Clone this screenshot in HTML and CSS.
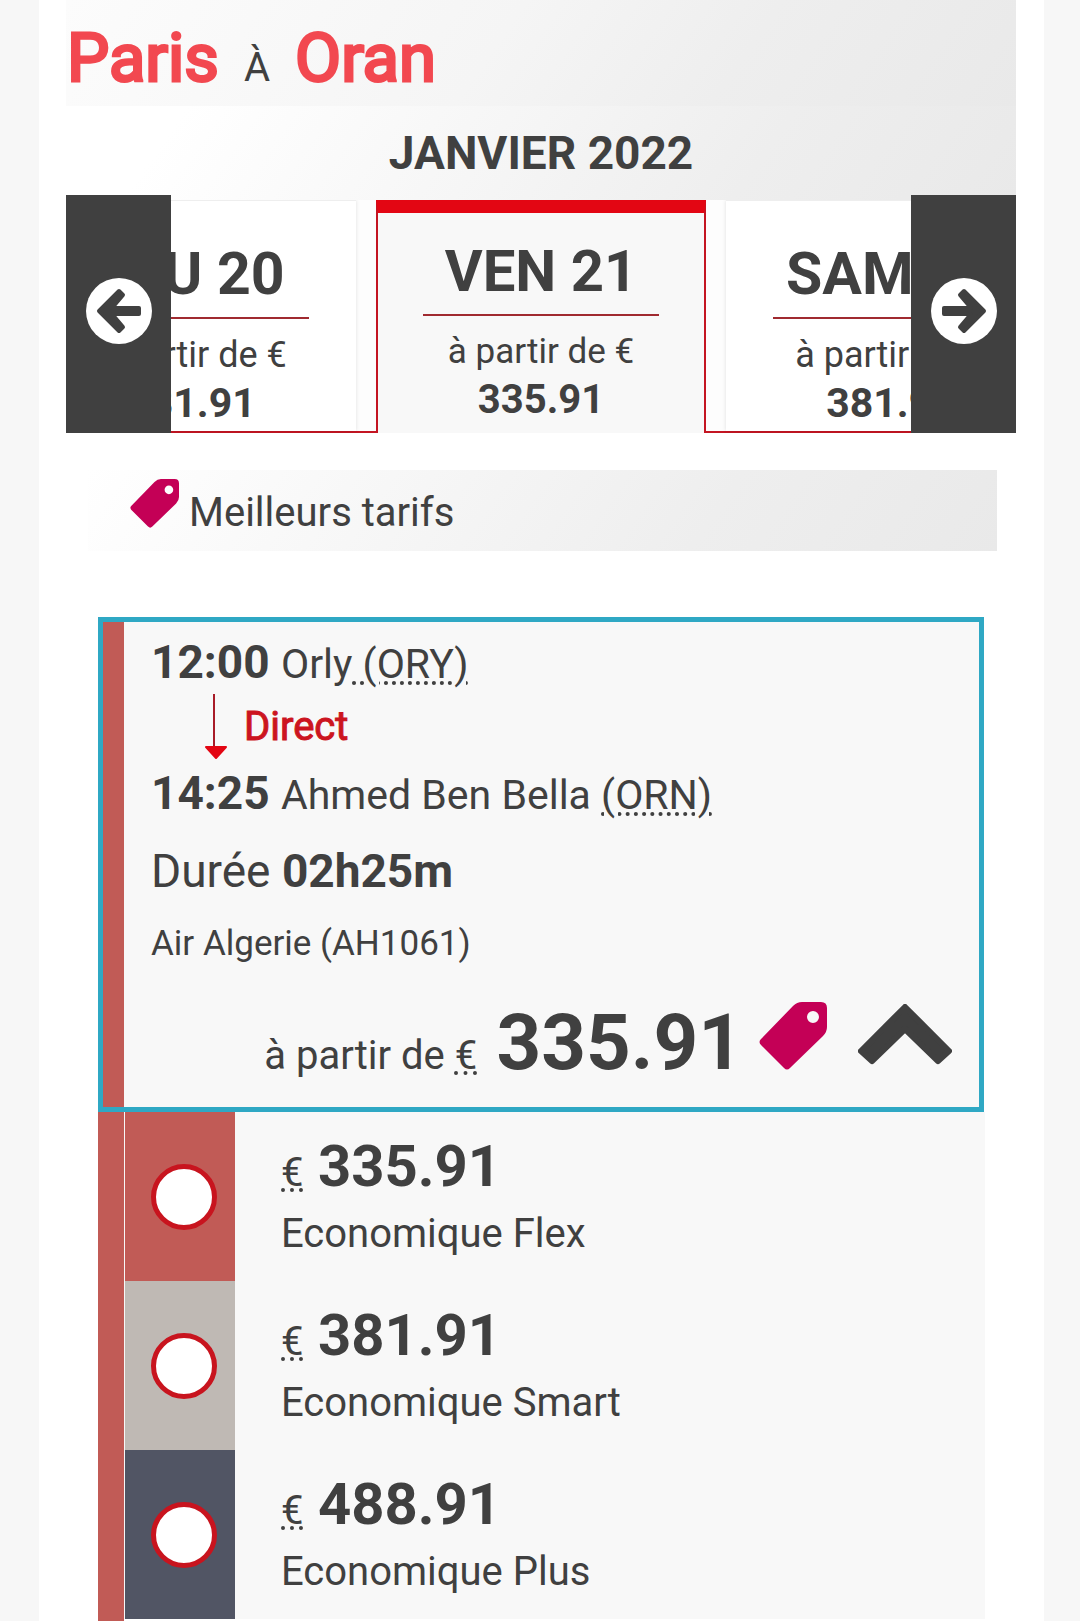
FILE: index.html
```html
<!DOCTYPE html>
<html lang="fr">
<head>
    <meta charset="utf-8">
    <meta name="viewport" content="width=device-width, initial-scale=1">
    <title>Paris à Oran</title>
    <link rel="stylesheet" href="styles.css">
</head>
<body>
    <svg class="sprite" aria-hidden="true">
        <symbol id="tag" viewBox="0 0 68 68">
            <path fill-rule="evenodd" d="M43 0H62Q68 0 68 6V25Q68 30 64 34L31 66Q28 69 25 66L2 43Q-1 40 2 37L34 4Q38 0 43 0ZM54 9a6 6 0 1 0 0 12a6 6 0 1 0 0-12Z"/>
        </symbol>
        <symbol id="arrow" viewBox="0 0 66 66">
            <circle cx="33" cy="33" r="33" fill="#fff"/>
            <path d="M13 33L33 13L37 17L26 30H53V36H26L37 49L33 53Z" fill="#404040" stroke="#404040" stroke-width="4" stroke-linejoin="round"/>
        </symbol>
    </svg>

    <main class="page">
        <h1 class="route">
            <span class="city">Paris</span>
            <span class="to">À</span>
            <span class="city">Oran</span>
        </h1>
        <h2 class="month">JANVIER 2022</h2>

        <div class="carousel">
            <ul class="days">
                <li class="day">
                    <div class="day-card">
                        <strong class="date">JEU 20</strong>
                        <span class="from">à partir de €</span>
                        <b class="day-price">381.91</b>
                    </div>
                </li>
                <li class="day selected">
                    <div class="day-card">
                        <strong class="date">VEN 21</strong>
                        <span class="from">à partir de €</span>
                        <b class="day-price">335.91</b>
                    </div>
                </li>
                <li class="day">
                    <div class="day-card">
                        <strong class="date">SAM 22</strong>
                        <span class="from">à partir de €</span>
                        <b class="day-price">381.91</b>
                    </div>
                </li>
            </ul>
            <button class="nav prev" type="button" aria-label="Jour précédent">
                <svg><use href="#arrow"/></svg>
            </button>
            <button class="nav next" type="button" aria-label="Jour suivant">
                <svg><use href="#arrow"/></svg>
            </button>
        </div>

        <div class="legend">
            <svg class="tag"><use href="#tag"/></svg>
            <span>Meilleurs tarifs</span>
        </div>

        <section class="flight">
            <div class="stop"><b>12:00 </b><span>Orly<abbr title="Paris Orly"> (ORY)</abbr></span></div>
            <div class="direct">
                <svg class="down" viewBox="0 0 24 66">
                    <path d="M10 0V54" stroke="#a81c28" stroke-width="2"/>
                    <path d="M2 53H22L12 64Z" fill="#e30613" stroke="#e30613" stroke-width="2" stroke-linejoin="round"/>
                </svg>
                <span>Direct</span>
            </div>
            <div class="stop"><b>14:25 </b><span>Ahmed Ben Bella <abbr title="Oran Ahmed Ben Bella">(ORN)</abbr></span></div>
            <div class="duration">Durée <b>02h25m</b></div>
            <div class="airline">Air Algerie (AH1061)</div>
            <div class="total">
                <div>à partir de <abbr title="Euro">€</abbr><b> 335.91</b></div>
                <svg class="tag"><use href="#tag"/></svg>
                <button class="toggle" type="button" aria-label="Masquer les tarifs" aria-expanded="true">
                    <svg viewBox="0 0 94 61">
                        <path d="M47 3L91 47L80 57L47 25L14 57L3 47Z" stroke="#404040" stroke-width="6" stroke-linejoin="round" fill="#404040"/>
                    </svg>
                </button>
            </div>
        </section>

        <form class="fares">
            <label class="fare flex">
                <span class="pick"><input type="radio" name="fare" value="flex"></span>
                <span class="info">
                    <span class="price"><abbr title="Euro">€</abbr><b> 335.91</b></span>
                    <span class="name">Economique Flex</span>
                </span>
            </label>
            <label class="fare smart">
                <span class="pick"><input type="radio" name="fare" value="smart"></span>
                <span class="info">
                    <span class="price"><abbr title="Euro">€</abbr><b> 381.91</b></span>
                    <span class="name">Economique Smart</span>
                </span>
            </label>
            <label class="fare plus">
                <span class="pick"><input type="radio" name="fare" value="plus"></span>
                <span class="info">
                    <span class="price"><abbr title="Euro">€</abbr><b> 488.91</b></span>
                    <span class="name">Economique Plus</span>
                </span>
            </label>
        </form>
    </main>
</body>
</html>
```

FILE: styles.css
```css
:root {
    --text: #404040;
    --red: #e30613;
    --dark-red: #c41522;
    --flex: #c15b56;
    --smart: #bfb9b4;
    --plus: #515564;
    --blue: #2fa8c4;
    --light: #f8f8f8;
    --tag: #c40056;
}

* {
    box-sizing: border-box;
}

body {
    margin: 0;
    background: #f7f7f7;
    color: var(--text);
    font-family: Roboto, "Liberation Sans", sans-serif;
    font-size: 40px;
    line-height: 48px;
}

button {
    padding: 0;
    border: 0;
    background: none;
    cursor: pointer;
}

svg {
    display: block;
}

.sprite {
    display: none;
}

.page {
    min-height: 100vh;
    margin: 0 36px 0 39px;
    padding: 0 28px 0 27px;
    background: white;
}

/* Title and month */
.route {
    display: flex;
    align-items: baseline;
    gap: 25px;
    margin: 0;
    padding: 18px 0 8px 1px;
    background: linear-gradient(125deg, #fcfcfc, #f5f5f5 45%, #eee 70%, #e9e9e9);
    font-size: 40px;
    font-weight: 400;
    line-height: 48px;
}

.city {
    color: #f24850;
    font-size: 67px;
    line-height: 80px;
    -webkit-text-stroke: 3px #f24850;
}

.month {
    margin: 0;
    background: linear-gradient(125deg, white 12%, #f5f5f5 48%, #eee 72%, #e9e9e9);
    font-size: 46px;
    line-height: 94px;
    text-align: center;
}

/* Day carousel */
.carousel {
    position: relative;
}

.days {
    display: flex;
    justify-content: center;
    margin: 0;
    padding: 0;
    overflow: hidden;
    list-style: none;
}

.day {
    flex: 0 0 370px;
    padding: 0 20px;
    border-bottom: 2px solid var(--dark-red);
    background: #fdfdfd;
}

.day-card {
    display: flex;
    flex-direction: column;
    height: 100%;
    padding: 39px 47px 0;
    border-top: 1px solid #eee;
    background: white;
    box-shadow: 0 0 4px rgba(0, 0, 0, 0.12);
    font-size: 36px;
    text-align: center;
}

.day.selected {
    flex-basis: 330px;
    padding: 0;
    border: 0;
}

.selected .day-card {
    padding: 24px 45px 9px;
    border: 2px solid var(--dark-red);
    border-top: 13px solid var(--red);
    border-bottom: 0;
    background: var(--light);
    box-shadow: none;
    font-size: 35px;
}

.date {
    margin-bottom: 12px;
    padding-bottom: 9px;
    border-bottom: 2px solid #a02a30;
    font-size: 59px;
    line-height: 68px;
}

.selected .date {
    font-size: 58px;
}

.day-price {
    font-size: 41px;
}

.selected .day-price {
    font-size: 40px;
}

.nav {
    position: absolute;
    top: -5px;
    bottom: 0;
    width: 105px;
    padding-bottom: 6px;
    background: var(--text);
}

.nav svg {
    width: 66px;
    height: 66px;
    margin: auto;
}

.prev {
    left: 0;
}

.next {
    right: 0;
}

.next svg {
    transform: scaleX(-1);
}

/* Best fares legend */
.legend {
    display: flex;
    align-items: flex-start;
    gap: 10px;
    margin: 37px 19px 66px 22px;
    padding: 9px 42px 14px;
    background: linear-gradient(125deg, white, #f5f5f5 40%, #eee 68%, #e9e9e9);
}

.legend span {
    margin-top: 10px;
}

.tag {
    flex: none;
    width: 49px;
    height: 49px;
    fill: var(--tag);
}

/* Flight summary */
.flight {
    margin: 0 32px;
    padding: 12px 27px 14px 48px;
    border: 5px solid var(--blue);
    background: linear-gradient(to right, var(--flex) 21px, var(--light) 21px);
}

.stop {
    font-size: 41px;
}

.stop b {
    font-size: 46px;
    line-height: 56px;
}

.direct {
    display: flex;
    align-items: center;
    gap: 16px;
    padding: 4px 0 5px 53px;
    color: #cc1420;
    -webkit-text-stroke: 1px #cc1420;
}

.down {
    width: 24px;
    height: 66px;
}

.duration {
    margin-top: 22px;
    font-size: 46px;
    line-height: 56px;
}

.airline {
    margin-top: 25px;
    font-size: 35px;
    line-height: 40px;
}

.total {
    display: flex;
    justify-content: flex-end;
    gap: 16px;
    margin-top: 29px;
}

.total b {
    font-size: 78px;
    line-height: 100px;
}

.total .tag {
    width: 68px;
    height: 68px;
    margin-top: 9px;
}

.toggle {
    align-self: flex-start;
    margin: 11px 0 0 15px;
}

.toggle svg {
    width: 94px;
    height: 61px;
}

/* Fare choices */
.fares {
    margin: 0 31px 0 32px;
    padding-bottom: 2px;
    border-left: 26px solid var(--flex);
}

.fare {
    display: flex;
    padding-left: 1px;
    background: var(--light);
    cursor: pointer;
}

.pick {
    display: flex;
    align-items: center;
    width: 110px;
    padding-left: 26px;
}

.flex .pick {
    background: var(--flex);
}

.smart .pick {
    background: var(--smart);
}

.plus .pick {
    background: var(--plus);
}

.pick input {
    appearance: none;
    width: 66px;
    height: 66px;
    margin: 0;
    border: 5px solid #c8141e;
    border-radius: 50%;
    background: white;
}

.pick input:checked {
    box-shadow: inset 0 0 0 12px white;
    background: var(--red);
}

.info {
    display: flex;
    flex-direction: column;
    gap: 10px;
    padding: 20px 0 23px 46px;
}

.price b {
    font-size: 58px;
    line-height: 68px;
}
```
